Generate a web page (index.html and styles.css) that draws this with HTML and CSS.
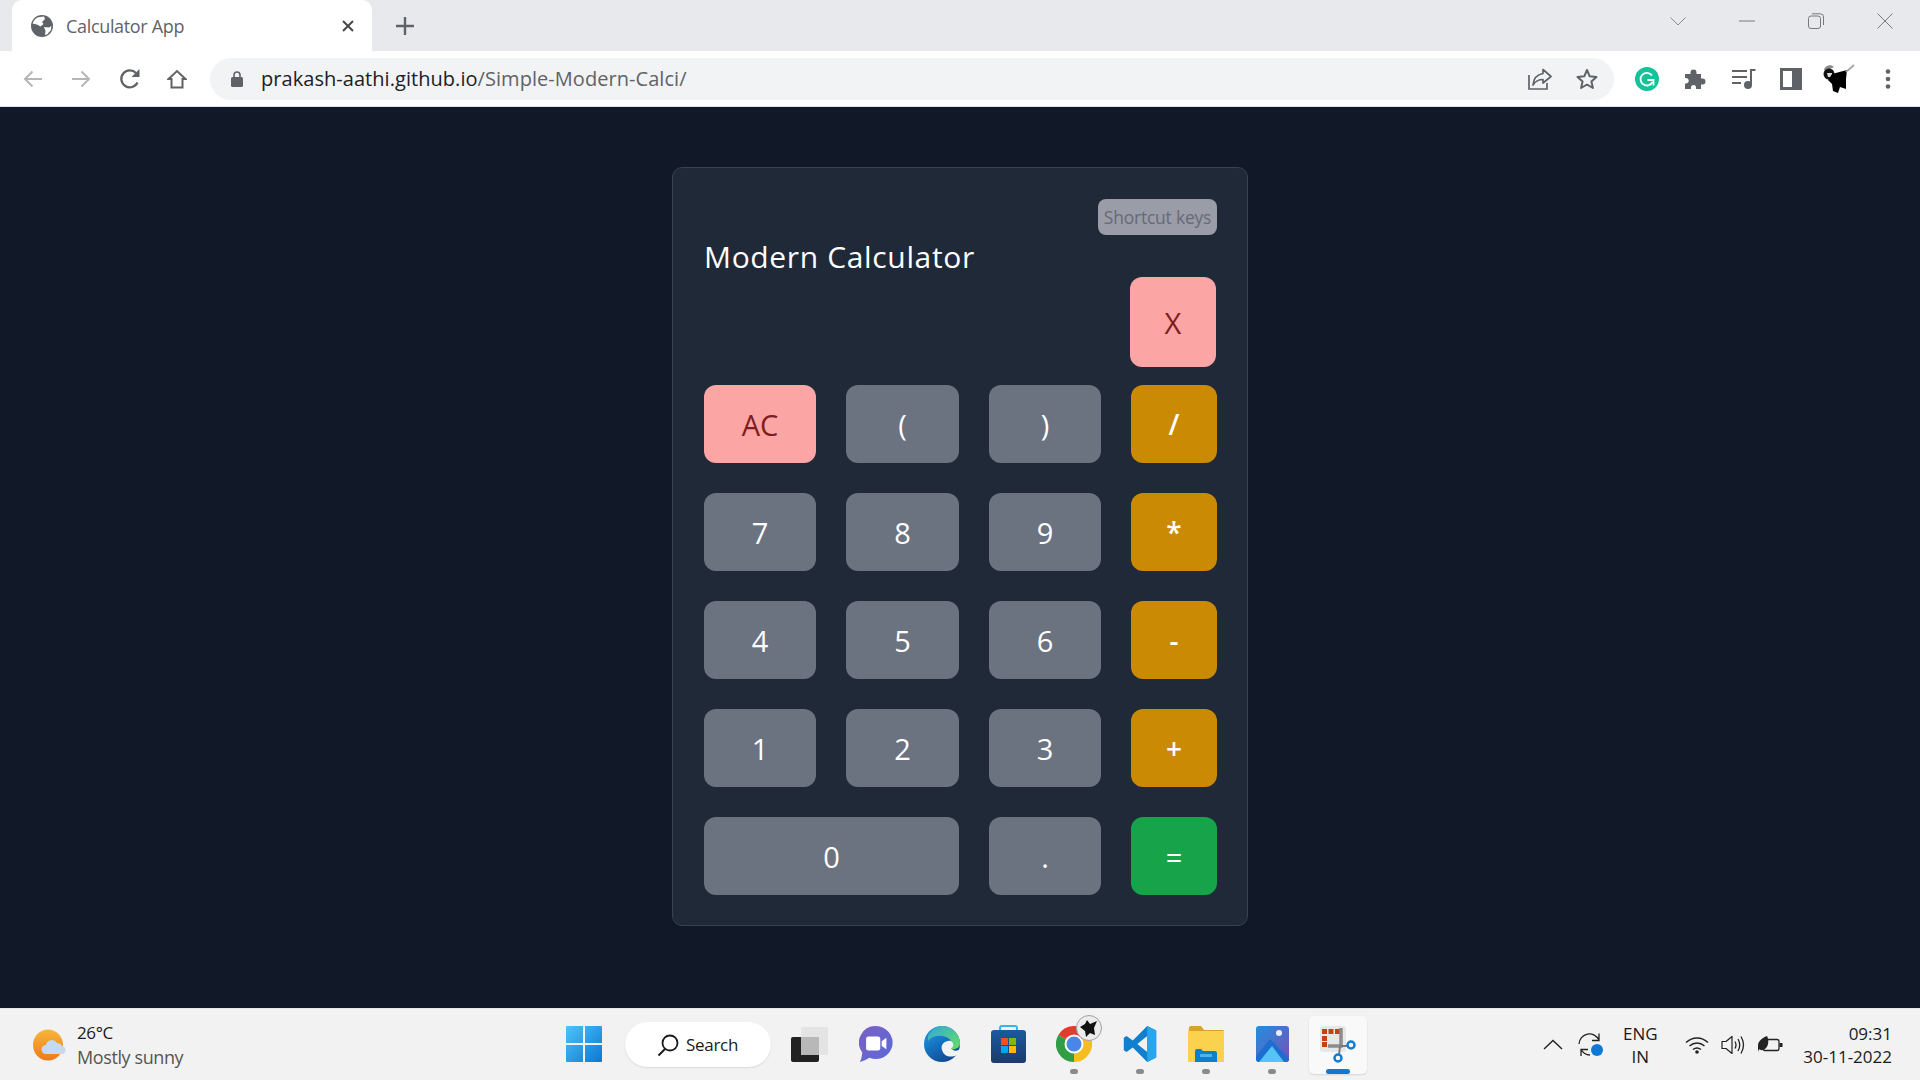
FILE: index.html
```html
<!DOCTYPE html>
<html lang="en">
<head>
<meta charset="utf-8">
<title>Calculator App</title>
<link rel="stylesheet" href="styles.css">
</head>
<body>
<div class="screen">
  <header class="tabstrip">
    <div class="tab">
      <svg class="tab-favicon" width="22" height="22" viewBox="0 0 22 22"><circle cx="11" cy="11" r="11" fill="#5f6368"/><path d="M7 2.200 13 1.600 14 4 11 7 12.500 9 9.500 11.500 6 9.500 1.600 8.500C2.500 5.600 4.500 3.300 7 2.200Z" fill="#fff"/><path d="M13 12 18 12.500 20.300 11 20 15 16 19.500 14 20 14.500 16Z" fill="#fff"/></svg>
      <span class="tab-title">Calculator App</span>
      <svg class="tab-close" width="12" height="12" viewBox="0 0 12 12"><path d="M1 1 11 11M11 1 1 11" stroke="#45494d" stroke-width="2" fill="none"/></svg>
    </div>
    <svg class="new-tab" width="18" height="18" viewBox="0 0 18 18"><path d="M9 0V18M0 9H18" stroke="#5f6368" stroke-width="2.400"/></svg>
    <div class="window-controls">
      <svg width="16" height="9" viewBox="0 0 16 9"><path d="M.5.5 8 8 15.500.5" stroke="#8a8c90" fill="none"/></svg>
      <svg width="16" height="2" viewBox="0 0 16 2"><path d="M0 1H16" stroke="#77797d"/></svg>
      <svg width="16" height="16" viewBox="0 0 16 16"><rect x=".5" y="3" width="12" height="12.500" rx="2.500" stroke="#77797d" fill="none"/><path d="M4 .8H12.500Q15.500.8 15.500 4V12" stroke="#77797d" fill="none"/></svg>
      <svg width="16" height="16" viewBox="0 0 16 16"><path d="M.5.5 15.500 15.500M15.500.5 .5 15.500" stroke="#77797d" fill="none"/></svg>
    </div>
  </header>

  <nav class="toolbar">
    <div class="nav-buttons">
      <svg width="20" height="18" viewBox="0 0 20 18"><path d="M19 9H2M9.500 1.500 2 9l7.500 7.500" stroke="#b4b7ba" stroke-width="2" fill="none"/></svg>
      <svg width="20" height="18" viewBox="0 0 20 18"><path d="M1 9H18M10.500 1.500 18 9l-7.500 7.500" stroke="#b4b7ba" stroke-width="2" fill="none"/></svg>
      <svg width="22" height="22" viewBox="0 0 22 22"><path d="M18.500 14.500A8.500 8.500 0 1 1 17 5" stroke="#5f6368" stroke-width="2.300" fill="none"/><path d="M20.500 1V9H12.500Z" fill="#5f6368"/></svg>
      <svg class="nav-home" width="20" height="20" viewBox="0 0 20 20"><path d="M1.500 10 10 2l8.500 8H15.500V18.500H4.500V10Z" stroke="#5f6368" stroke-width="2" fill="none"/></svg>
    </div>
    <div class="omnibox">
      <svg class="lock" width="12" height="16" viewBox="0 0 12 16"><rect y="6" width="12" height="10" rx="1.500" fill="#5f6368"/><path d="M3 7V4a3 3 0 0 1 6 0V7" stroke="#5f6368" stroke-width="1.600" fill="none"/></svg>
      <span class="url"><span class="url-host">prakash-aathi.github.io</span>/Simple-Modern-Calci/</span>
      <div class="omni-actions">
        <svg width="24" height="22" viewBox="0 0 24 22"><path d="M1 7V21H19V15" stroke="#5f6368" stroke-width="1.700" fill="none"/><path d="M15 1.500 23 8.500 15 15V11.500C10 11.500 7.500 13 5 17 5.500 11 9 6.500 15 5.500Z" stroke="#5f6368" stroke-width="1.700" fill="none" stroke-linejoin="round"/></svg>
        <svg width="22" height="22" viewBox="0 0 22 22"><path d="M11 2 13.700 8.300 20.500 8.900 15.400 13.400 16.900 20 11 16.500 5.100 20 6.600 13.400 1.500 8.900 8.300 8.300Z" stroke="#5f6368" stroke-width="2" fill="none" stroke-linejoin="round"/></svg>
      </div>
    </div>
    <div class="extensions">
      <svg width="24" height="24" viewBox="0 0 24 24"><circle cx="12" cy="12" r="12" fill="#15c39a"/><path d="M17 8.500A6.300 6.300 0 1 0 17.500 15" stroke="#fff" stroke-width="1.800" fill="none"/><path d="M12.500 13H18.500V18.500" stroke="#fff" stroke-width="1.800" fill="none"/></svg>
      <svg width="22" height="22" viewBox="0 0 22 22"><path d="M1 6H6.500V4.500a3 3 0 0 1 6 0V6H17V10.500H18.500a3 3 0 0 1 0 6H17V21H12V19.500a2.500 2.500 0 0 0-5 0V21H1V15.500H2.500a2.800 2.800 0 0 0 0-5.500H1Z" fill="#5f6368"/></svg>
      <svg width="24" height="22" viewBox="0 0 24 22"><path d="M0 3H15M0 9H15M0 15H9" stroke="#5f6368" stroke-width="2" fill="none"/><circle cx="16" cy="17" r="4" fill="#5f6368"/><path d="M19 17V2H23.500" stroke="#5f6368" stroke-width="2" fill="none"/></svg>
      <svg width="22" height="22" viewBox="0 0 22 22"><path d="M0 0H22V22H0ZM3 3V19H12V3Z" fill="#5f6368" fill-rule="evenodd"/></svg>
      <svg class="avatar" width="32" height="30" viewBox="0 0 32 30"><path d="M1 5C3 1 8 0 11 3L7 5 2 7Z" fill="#8a8a8a"/><circle cx="6" cy="10" r="5.500" fill="#111"/><path d="M4 9H9V13H5Z" fill="#ddd"/><path d="M9 10 24 6 23 15 23 25 17 23 15 29 10 27 9 20 5 16Z" fill="#000"/><path d="M23 8 31 1" stroke="#a8a8a8" stroke-width="2"/></svg>
      <svg width="6" height="20" viewBox="0 0 6 20"><circle cx="3" cy="2.500" r="2.300" fill="#5f6368"/><circle cx="3" cy="10" r="2.300" fill="#5f6368"/><circle cx="3" cy="17.500" r="2.300" fill="#5f6368"/></svg>
    </div>
  </nav>

  <main class="page">
    <section class="card">
      <div class="card-top"><button class="shortcut">Shortcut keys</button></div>
      <h1 class="title">Modern Calculator</h1>
      <div class="display"><button class="key key-clear key-x">X</button></div>
      <div class="keys">
        <button class="key key-clear">AC</button>
        <button class="key">(</button>
        <button class="key">)</button>
        <button class="key key-op">/</button>
        <button class="key">7</button>
        <button class="key">8</button>
        <button class="key">9</button>
        <button class="key key-op">*</button>
        <button class="key">4</button>
        <button class="key">5</button>
        <button class="key">6</button>
        <button class="key key-op">-</button>
        <button class="key">1</button>
        <button class="key">2</button>
        <button class="key">3</button>
        <button class="key key-op">+</button>
        <button class="key key-wide">0</button>
        <button class="key">.</button>
        <button class="key key-eq">=</button>
      </div>
    </section>
  </main>

  <footer class="taskbar">
    <div class="weather">
      <svg width="34" height="32" viewBox="0 0 34 32"><defs><linearGradient id="sun" x1="0" y1="0" x2="0" y2="1"><stop offset="0" stop-color="#f6b73c"/><stop offset="1" stop-color="#ef7a1a"/></linearGradient></defs><ellipse cx="15" cy="16" rx="15" ry="15.500" fill="url(#sun)"/><path d="M13 25a4.500 4.500 0 0 1 0-9 6 6 0 0 1 11-2 5.500 5.500 0 0 1 5 3 4.200 4.200 0 0 1 1 8Z" fill="#c4d9f4"/></svg>
      <div class="weather-text">
        <span class="temp">26°C</span>
        <span class="cond">Mostly sunny</span>
      </div>
    </div>
    <div class="task-slot">
      <svg width="36" height="36" viewBox="0 0 36 36"><defs><linearGradient id="win" x1="0" y1="0" x2="1" y2="1"><stop offset="0" stop-color="#4fc3f7"/><stop offset="1" stop-color="#0a78d4"/></linearGradient></defs><path d="M1 0H17V17H0V1Q0 0 1 0ZM19 0H35Q36 0 36 1V17H19ZM0 19H17V36H1Q0 36 0 35ZM19 19H36V35Q36 36 35 36H19Z" fill="url(#win)"/></svg>
    </div>
    <div class="search-pill">
      <svg width="22" height="24" viewBox="0 0 22 24"><circle cx="13" cy="10" r="7.500" stroke="#1a1a1a" stroke-width="1.800" fill="none"/><path d="M8 16 1.500 22.500" stroke="#1a1a1a" stroke-width="2"/></svg>
      <span>Search</span>
    </div>
    <div class="task-slot">
      <svg width="38" height="36" viewBox="0 0 38 36"><rect x="10" y="1" width="27" height="28" rx="1" fill="#e4e4e4"/><rect y="11" width="28" height="25" rx="2" fill="#222"/><rect x="10" y="11" width="18" height="18" fill="#b8b8b8"/></svg>
    </div>
    <div class="task-slot">
      <svg width="34" height="36" viewBox="0 0 36 38"><defs><linearGradient id="teams" x1="0" y1="0" x2="1" y2="1"><stop offset="0" stop-color="#7b5fc4"/><stop offset="1" stop-color="#5a6bd8"/></linearGradient></defs><path d="M18 0a17.500 17.500 0 1 1-7 33.500Q6 37 1 38 3 34 3.500 28A17.500 17.500 0 0 1 18 0Z" fill="url(#teams)"/><rect x="7.500" y="11" width="15" height="15" rx="2.500" fill="#fff"/><path d="M24 16 29 12.500V24.500L24 21Z" fill="#fff"/></svg>
    </div>
    <div class="task-slot">
      <svg width="36" height="36" viewBox="0 0 36 36"><defs><linearGradient id="edge" x1="0" y1="0" x2=".6" y2="1"><stop offset="0" stop-color="#2c9fdb"/><stop offset=".55" stop-color="#1470c0"/><stop offset="1" stop-color="#114a94"/></linearGradient><linearGradient id="edge2" x1="0" y1="0" x2="1" y2=".9"><stop offset="0" stop-color="#2fa8d8"/><stop offset="1" stop-color="#66dc68"/></linearGradient></defs><circle cx="18" cy="18" r="18" fill="url(#edge)"/><path d="M4 10C8 3 13 0 18 0 28 0 36 8 36 17 36 22 31 24 27 23 30 20 29 14 22 11 15 8.500 8 10 4 15Z" fill="url(#edge2)"/><path d="M18 24C16 18 22 14 27 15 30 17 30 21 27 22.500 31 26 34 25 36 22.500 36 25 35 27 33 29 27 32 20 31 18 24Z" fill="#f2f2f2"/></svg>
    </div>
    <div class="task-slot">
      <svg width="35" height="38" viewBox="0 0 35 38"><defs><linearGradient id="store" x1="0" y1="0" x2="0" y2="1"><stop offset="0" stop-color="#1a5a9e"/><stop offset="1" stop-color="#1c3a6c"/></linearGradient></defs><path d="M9 6V3Q9 1 11 1H24Q26 1 26 3V6" stroke="#35b4ee" stroke-width="2" fill="none"/><path d="M3 5H32Q35 5 35 8V35Q35 38 32 38H3Q0 38 0 35V8Q0 5 3 5Z" fill="url(#store)"/><rect x="10" y="13" width="7" height="7" fill="#f25022"/><rect x="18" y="13" width="7" height="7" fill="#7fba00"/><rect x="10" y="21" width="7" height="7" fill="#00a4ef"/><rect x="18" y="21" width="7" height="7" fill="#ffb900"/></svg>
    </div>
    <div class="task-slot">
      <div class="chrome-wrap">
        <svg width="36" height="36" viewBox="0 0 36 36"><path d="M18 18 2.400 9A18 18 0 0 1 33.600 9Z" fill="#e33b2e"/><path d="M18 18 18 36A18 18 0 0 1 2.400 9Z" fill="#2f9e44"/><path d="M18 18 33.600 9A18 18 0 0 1 18 36Z" fill="#f5bd1f"/><circle cx="18" cy="18" r="9.500" fill="#fff"/><circle cx="18" cy="18" r="7.500" fill="#4a86e8"/></svg>
        <svg class="chrome-badge" width="26" height="26" viewBox="0 0 26 26"><circle cx="13" cy="13" r="12.500" fill="#ececec" stroke="#a0a0a0"/><path d="M4 12 9 9 11 5 14 9 21 6 18 13 19 20 14 18 10 22 9 16Z" fill="#111"/></svg>
      </div>
      <i class="run-dot"></i>
    </div>
    <div class="task-slot">
      <svg width="36" height="36" viewBox="0 0 36 40"><path d="M26 0 36 5V35L26 40 10 24 3 29 0 27V13L3 11 10 16ZM26 11 15 20 26 29Z" fill="#0f7fce"/><path d="M26 0 36 5V35L26 40V29 11Z" fill="#29a5ee"/></svg>
      <i class="run-dot"></i>
    </div>
    <div class="task-slot">
      <svg width="36" height="36" viewBox="0 0 36 36"><path d="M1 2Q1 0 3 0H13L16 4H35Q36 4 36 6V12H0Z" fill="#d8a02c"/><rect y="5" width="36" height="31" fill="#fbd24e"/><path d="M7 36V25Q7 23 9 23H13L15 25H27Q29 25 29 27V36Z" fill="#0c7fd0"/><rect x="12" y="28" width="12" height="3" fill="#4fb2ec"/></svg>
      <i class="run-dot"></i>
    </div>
    <div class="task-slot">
      <svg width="33" height="36" viewBox="0 0 33 36"><defs><linearGradient id="ph" x1="0" y1="0" x2="1" y2="1"><stop offset="0" stop-color="#1f8fe0"/><stop offset="1" stop-color="#7a4fb5"/></linearGradient></defs><rect width="33" height="36" rx="3" fill="url(#ph)"/><circle cx="23" cy="7" r="3" fill="#e8f0fa"/><path d="M0 30 14 13 33 32V33Q33 36 30 36H4Q0 36 0 33Z" fill="#1c6fd0"/><path d="M3 36 16 20 28 36Z" fill="#54c4f4"/></svg>
      <i class="run-dot"></i>
    </div>
    <div class="task-slot task-active">
      <svg width="38" height="38" viewBox="0 0 38 38"><rect x="1" y="1" width="26" height="26" rx="3" fill="#e6e7e9"/><g fill="#c8401a"><rect x="3" y="4" width="5" height="5"/><rect x="9.500" y="4" width="5" height="5"/><rect x="16" y="4" width="5" height="5"/><rect x="3" y="11" width="5" height="5"/><rect x="3" y="17" width="5" height="5"/></g><path d="M22 3V21H9" stroke="#8c8c8c" stroke-width="3.500" fill="none"/><path d="M21 21H29M21 21 20 30" stroke="#7a7a7a" stroke-width="2" fill="none"/><circle cx="32" cy="20" r="3.500" stroke="#0e7ed2" stroke-width="2.500" fill="none"/><circle cx="19" cy="33" r="3.500" stroke="#0e7ed2" stroke-width="2.500" fill="none"/></svg>
      <i class="run-dot run-active"></i>
    </div>
    <div class="tray">
      <svg class="tray-caret" width="20" height="11" viewBox="0 0 20 11"><path d="M1 10 10 1.500 19 10" stroke="#222" stroke-width="1.400" fill="none"/></svg>
      <svg class="tray-sync" width="26" height="26" viewBox="0 0 26 26"><path d="M1 12A10.500 10.500 0 0 1 21 8M21 1.500V8.500H14M3 24V17.500H10M3 17.500A10.500 10.500 0 0 0 12 23" stroke="#222" stroke-width="1.300" fill="none"/><circle cx="19" cy="18" r="6" fill="#0f78d4"/></svg>
      <div class="lang"><span>ENG</span><span>IN</span></div>
      <svg class="tray-wifi" width="24" height="18" viewBox="0 0 24 18"><path d="M1 6.500C7.500.5 16.500.5 23 6.500M4.500 10C9 6 15 6 19.500 10M8 13.500C10.500 11.500 13.500 11.500 16 13.500" stroke="#222" stroke-width="1.500" fill="none"/><circle cx="12" cy="16" r="1.800" fill="#222"/></svg>
      <svg class="tray-sound" width="24" height="20" viewBox="0 0 24 20"><path d="M1 6.500H5L11 1.500V18.500L5 13.500H1Z" stroke="#222" stroke-width="1.200" fill="none" stroke-linejoin="round"/><path d="M14 6.500Q16 10 14 13.500M17 4Q20.500 10 17 16M20 1.500Q25 10 20 18.500" stroke="#222" stroke-width="1.300" fill="none"/></svg>
      <svg class="tray-batt" width="26" height="18" viewBox="0 0 26 18"><rect x="5" y="3.500" width="16" height="11" rx="2" stroke="#222" stroke-width="1.300" fill="none"/><rect x="21.500" y="7" width="3" height="4" fill="#222"/><path d="M0 10C0 5 4 2 9 0 11 4 11 10 7 13 4 15 2 14 1 13L0 16Z" fill="#222"/></svg>
      <div class="clock"><span>09:31</span><span>30-11-2022</span></div>
    </div>
  </footer>
</div>
</body>
</html>
```
FILE: styles.css
```css
* { box-sizing: border-box; margin: 0; padding: 0; }
html, body { width: 100%; height: 100%; overflow: hidden; }
body { font-family: "Open Sans", "Noto Sans", sans-serif; background: #111827; }
.screen { display: flex; flex-direction: column; height: 1080px; }

/* tab strip */
.tabstrip { height: 51px; flex: none; background: #e7e9ed; display: flex; align-items: center; position: relative; }
.tab { width: 360px; height: 51px; margin-left: 12px; background: #fff; border-radius: 10px 10px 0 0; display: flex; align-items: center; padding: 0 18px 0 19px; }
.tab-favicon { flex: none; margin-right: 13px; }
.tab-title { font-size: 18px; letter-spacing: -.33px; color: #5f6368; flex: 1; }
.new-tab { margin-left: 24px; }
.window-controls { margin-left: auto; display: flex; align-items: center; gap: 53px; padding-right: 27px; padding-bottom: 9px; }

/* toolbar */
.toolbar { height: 56px; flex: none; background: #fff; display: flex; align-items: center; border-bottom: 1px solid #dfe1e5; }
.nav-buttons { display: flex; align-items: center; gap: 28px; padding-left: 23px; width: 210px; }
.nav-home { margin-left: -2px; }
.omnibox { width: 1404px; height: 42px; background: #f1f3f4; border-radius: 21px; display: flex; align-items: center; padding-left: 21px; }
.lock { flex: none; margin-right: 18px; }
.url { font-size: 20px; letter-spacing: .05px; color: #5f6368; white-space: nowrap; }
.url-host { color: #202124; }
.omni-actions { margin-left: auto; display: flex; align-items: center; gap: 24px; padding-right: 16px; }
.extensions { display: flex; align-items: center; margin-left: 21px; }
.extensions svg { margin-right: 25px; }
.extensions svg:nth-child(2) { margin-right: 26px; }
.extensions svg:nth-child(3), .extensions svg:nth-child(4) { margin-right: 24px; }
.extensions .avatar { margin-right: 30px; margin-left: -3px; }

/* page */
.page { flex: 1; background: #111827; display: flex; justify-content: center; align-items: flex-start; padding-top: 60px; }
.card { width: 576px; height: 759px; background: #1f2937; border: 1px solid #374151; border-radius: 10px; padding: 31px 30px 30px 31px; }
.card-top { display: flex; justify-content: flex-end; }
.shortcut { width: 119px; height: 36px; border: 0; border-radius: 8px; background: #9a9ca8; color: #666a75; font: 400 17.500px/36px "Open Sans", sans-serif; letter-spacing: -.22px; white-space: nowrap; }
.title { font-size: 30px; line-height: 40px; padding-top: 2px; font-weight: 400; color: #fff; letter-spacing: .65px; white-space: nowrap; }
.display { display: flex; justify-content: flex-end; height: 90px; margin-bottom: 18px; padding-right: 1px; }
.keys { display: grid; grid-template-columns: 112px 113px 112px 86px; grid-auto-rows: 78px; gap: 30px; }
.key { border: 0; border-radius: 12px; background: #6b7280; color: #fff; font: 400 29px/1 "Open Sans", sans-serif; }
.key-x { width: 86px; height: 90px; }
.key-clear { background: #fca5a5; color: #7f1d1d; }
.key-op { background: #ca8a04; font-weight: 600; font-size: 28px; }
.key-eq { background: #16a34a; }
.key-wide { grid-column: span 2; }

/* taskbar */
.taskbar { height: 72px; flex: none; background: #f2f2f2; border-top: 1px solid #e6e6e6; display: flex; align-items: stretch; }
.weather { width: 551px; display: flex; align-items: center; padding-left: 33px; gap: 10px; }
.weather-text { display: flex; flex-direction: column; line-height: 24px; font-size: 18px; letter-spacing: -.4px; }
.temp { color: #1a1a1a; font-size: 17px; }
.cond { color: #555; }
.task-slot { width: 66px; display: flex; align-items: center; justify-content: center; position: relative; flex: none; padding-bottom: 2px; }
.search-pill { width: 146px; height: 45px; align-self: center; margin: 0 6px 0 8px; background: #fff; border-radius: 23px; box-shadow: 0 1px 2px rgba(0,0,0,.1); display: flex; align-items: center; padding-left: 32px; gap: 7px; font-size: 17px; letter-spacing: -.3px; color: #1a1a1a; }
.chrome-wrap { position: relative; display: flex; }
.chrome-badge { position: absolute; left: 20px; top: -11px; }
.run-dot { position: absolute; bottom: 6px; left: 29px; width: 8px; height: 5px; border-radius: 3px; background: #8a8a8a; }
.task-active { height: 58px; align-self: center; width: 58px; margin: 0 4px; background: #f9f9f9; border-radius: 5px; box-shadow: 0 1px 2px rgba(0,0,0,.12); }
.run-active { left: 17px; width: 24px; background: #0f78d4; bottom: 0; }
.tray { margin-left: auto; display: flex; align-items: center; color: #1a1a1a; font-size: 17px; letter-spacing: 0; }
.tray-caret { margin-right: 15px; }
.tray-sync { margin-right: 14px; }
.lang { display: flex; flex-direction: column; align-items: center; line-height: 23px; width: 44px; margin-right: 23px; }
.tray-wifi { margin-right: 12px; }
.tray-sound { margin-right: 13px; }
.tray-batt { margin-right: 19px; }
.clock { display: flex; flex-direction: column; align-items: flex-end; line-height: 23px; padding-right: 28px; }
```
